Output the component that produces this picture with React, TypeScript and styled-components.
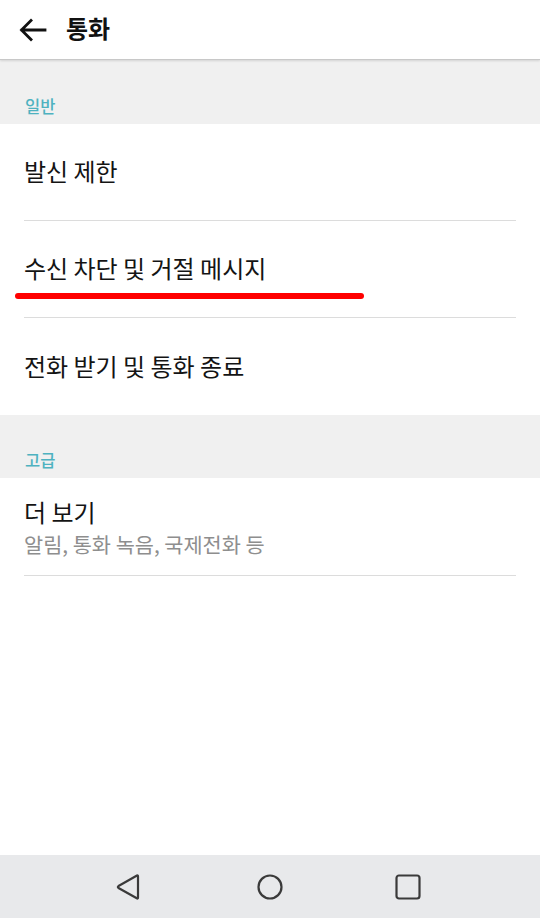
import React from "react";
import styled, { createGlobalStyle } from "styled-components";

const Global = createGlobalStyle`
  html, body { margin: 0; padding: 0; background: #ffffff; }
  body { font-family: "Noto Sans CJK KR", "Noto Sans", Roboto, sans-serif; }
  * { box-sizing: border-box; }
`;

const Screen = styled.div`
  width: 540px;
  height: 918px;
  display: flex;
  flex-direction: column;
  background: #ffffff;
  overflow: hidden;
`;

const Toolbar = styled.header`
  height: 60px;
  flex: none;
  display: flex;
  align-items: center;
  padding-left: 19px;
  gap: 19px;
  background: #ffffff;
  border-bottom: 1px solid #c8c8c8;
  box-shadow: 0 1px 2px rgba(0, 0, 0, 0.12);
  position: relative;
  z-index: 1;
`;

const Title = styled.h1`
  margin: 0;
  font-size: 24px;
  font-weight: 700;
  color: #111111;
  line-height: 1;
  padding-bottom: 3px;
`;

const Content = styled.main`
  flex: 1;
  display: flex;
  flex-direction: column;
`;

const SectionHeader = styled.div<{ $h: number }>`
  height: ${(p) => p.$h}px;
  background: #f0f0f0;
  display: flex;
  align-items: flex-end;
  padding: 0 0 10px 25px;
  font-size: 16.5px;
  font-weight: 500;
  color: #4eb2c0;
  line-height: 1;
`;

const Row = styled.div<{ $h: number; $divider: boolean }>`
  height: ${(p) => p.$h}px;
  margin: 0 24px;
  display: flex;
  flex-direction: column;
  justify-content: center;
  border-bottom: ${(p) => (p.$divider ? "1px solid #dcdcdc" : "none")};
  position: relative;
`;

const RowTitle = styled.div`
  font-size: 24px;
  color: #141414;
  line-height: 1.25;
  padding-bottom: 2px;
`;

const RowSub = styled.div`
  font-size: 20.8px;
  color: #8e8e8e;
  line-height: 1.25;
  margin-top: 2px;
`;

const Highlight = styled.span`
  position: absolute;
  left: -9px;
  top: 72px;
  width: 349px;
  height: 6px;
  border-radius: 3px;
  background: #ff0000;
`;

const NavBar = styled.nav`
  height: 63px;
  flex: none;
  background: #e8e9eb;
  display: grid;
  grid-template-columns: 254px 140px 140px;
  align-items: center;
`;

const NavButton = styled.div<{ $pad: number }>`
  display: flex;
  justify-content: flex-start;
  padding-left: ${(p) => p.$pad}px;
`;

const BackArrow = () => (
  <svg width="28" height="24" viewBox="0 0 28 24" fill="none">
    <path d="M26 12H3M12 2.5L2.5 12 12 21.5" stroke="#111" strokeWidth="2.8" strokeLinecap="square" />
  </svg>
);

const rows = [
  { title: "발신 제한", h: 97, divider: true },
  { title: "수신 차단 및 거절 메시지", h: 97, divider: true, highlight: true },
  { title: "전화 받기 및 통화 종료", h: 97, divider: false },
];

export default function App() {
  return (
    <Screen>
      <Global />
      <Toolbar>
        <BackArrow />
        <Title>통화</Title>
      </Toolbar>
      <Content>
        <SectionHeader $h={64}>일반</SectionHeader>
        {rows.map((r) => (
          <Row key={r.title} $h={r.h} $divider={r.divider}>
            <RowTitle>{r.title}</RowTitle>
            {r.highlight && <Highlight />}
          </Row>
        ))}
        <SectionHeader $h={63}>고급</SectionHeader>
        <Row $h={98} $divider={true}>
          <RowTitle>더 보기</RowTitle>
          <RowSub>알림, 통화 녹음, 국제전화 등</RowSub>
        </Row>
      </Content>
      <NavBar>
        <NavButton $pad={115}>
          <svg width="26" height="28" viewBox="0 0 26 28" fill="none">
            <path d="M22 2.5 Q23 2 23 3.5 V24.5 Q23 26 21.8 25.3 L3.5 15 Q2.2 14 3.5 13 Z" stroke="#3a3a3a" strokeWidth="2.2" strokeLinejoin="round" />
          </svg>
        </NavButton>
        <NavButton $pad={2}>
          <svg width="28" height="28" viewBox="0 0 28 28" fill="none">
            <circle cx="14" cy="14" r="11.5" stroke="#3a3a3a" strokeWidth="2.2" />
          </svg>
        </NavButton>
        <NavButton $pad={0}>
          <svg width="28" height="28" viewBox="0 0 28 28" fill="none">
            <rect x="2.5" y="2.5" width="23" height="23" rx="2.5" stroke="#3a3a3a" strokeWidth="2.2" />
          </svg>
        </NavButton>
      </NavBar>
    </Screen>
  );
}
